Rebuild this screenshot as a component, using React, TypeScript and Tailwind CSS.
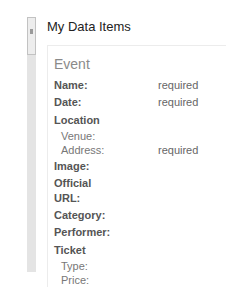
const rows: { label: string; req?: boolean; subs?: { label: string; req?: boolean }[]; lines?: string[] }[] = [
  { label: 'Name:', req: true },
  { label: 'Date:', req: true },
  { label: 'Location', subs: [{ label: 'Venue:' }, { label: 'Address:', req: true }] },
  { label: 'Image:' },
  { label: 'Official', lines: ['Official', 'URL:'] },
  { label: 'Category:' },
  { label: 'Performer:' },
  { label: 'Ticket', subs: [{ label: 'Type:' }, { label: 'Price:' }] },
]

export default function App() {
  return (
    <div className="h-[303px] w-[234px] overflow-hidden bg-white font-['Liberation_Sans',Arial,sans-serif]">
      <div className="flex pt-[17px] pl-[27px]">
        {/* scrollbar */}
        <div className="flex h-[255px] w-[9px] flex-col bg-[#e4e4e4]">
          <div className="flex h-[38px] flex-col items-center border border-[#c2c2c2] bg-[#ededed] pt-[11px]">
            <div className="h-[5px] w-[3px] bg-[#9a9a9a]" />
          </div>
        </div>

        <div className="ml-[11px] flex-1">
          <h1 className="mt-[2px] text-[13px] leading-[16px] text-[#222]">My Data Items</h1>

          <div className="mt-[10px] mr-[8px] border-t border-l border-[#ececec] pl-[6px] pt-[9px]">
            <div className="text-[14px] leading-[18px] text-[#8a8a8a]">Event</div>

            <div className="mt-[5px] flex flex-col gap-[2px] text-[11px] leading-[15px]">
              {rows.map(r => (
                <div key={r.label} className={r.subs ? 'mt-[1px]' : ''}>
                  <div className="flex">
                    <div className="w-[104px] font-bold text-[#555]">
                      {r.lines ? r.lines.map(l => <div key={l}>{l}</div>) : r.label}
                    </div>
                    {r.req && <span className="text-[#666]">required</span>}
                  </div>
                  {r.subs && (
                    <div className="mt-[1px]">
                      {r.subs.map(s => (
                        <div key={s.label} className="flex leading-[14px]">
                          <div className="w-[104px] pl-[7px] text-[#777]">{s.label}</div>
                          {s.req && <span className="text-[#666]">required</span>}
                        </div>
                      ))}
                    </div>
                  )}
                </div>
              ))}
            </div>
          </div>
        </div>
      </div>
    </div>
  )
}
